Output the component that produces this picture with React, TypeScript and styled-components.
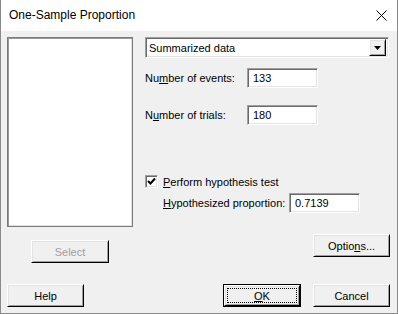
import React from "react"
import styled, { createGlobalStyle, css } from "styled-components"

const GlobalStyle = createGlobalStyle`
	html, body {
		margin: 0;
		padding: 0;
		background: #ffffff;
	}
	* {
		box-sizing: border-box;
	}
`

const sunken = css`
	border: 1px solid;
	border-color: #a0a0a0 #ffffff #ffffff #a0a0a0;
	box-shadow: inset 1px 1px #696969, inset -1px -1px #e3e3e3;
	background: #ffffff;
`

const raised = css`
	border: 1px solid;
	border-color: #ffffff #000000 #000000 #ffffff;
	box-shadow: inset 1px 1px #e3e3e3, inset -1px -1px #a0a0a0;
	background: #f0f0f0;
`

const Window = styled.div`
	width: 398px;
	height: 314px;
	display: flex;
	flex-direction: column;
	border: 1px solid #8a8a8a;
	border-top: none;
	font-family: "Liberation Sans", Arial, sans-serif;
	font-size: 11px;
	color: #000000;
`

const TitleBar = styled.div`
	height: 31px;
	flex: none;
	display: flex;
	align-items: center;
	justify-content: space-between;
	padding: 0 10px 0 8px;
	background: #ffffff;
`

const Title = styled.span`
	font-size: 12px;
	padding-bottom: 1px;
`

const Body = styled.div`
	flex: 1;
	display: flex;
	flex-direction: column;
	justify-content: space-between;
	padding: 6px 6px 6px 6px;
	background: #f0f0f0;
`

const MainRow = styled.div`
	display: flex;
	gap: 12px;
`

const LeftColumn = styled.div`
	width: 126px;
	display: flex;
	flex-direction: column;
	align-items: center;
	gap: 13px;
`

const ListBox = styled.div`
	width: 126px;
	height: 190px;
	border: 1px solid #7a7a7a;
	box-shadow: inset 1px 1px #9a9a9a, inset -1px -1px #e3e3e3;
	background: #ffffff;
`

const RightColumn = styled.div`
	flex: 1;
	display: flex;
	flex-direction: column;
`

const Combo = styled.div`
	${sunken};
	width: 244px;
	height: 21px;
	display: flex;
	align-items: center;
	justify-content: space-between;
	padding: 0 2px 0 3px;
`

const ComboArrow = styled.div`
	${raised};
	width: 17px;
	height: 17px;
	display: flex;
	align-items: center;
	justify-content: center;
`

const FieldRow = styled.div<{ $top: number; $indent?: number; $labelWidth: number }>`
	display: flex;
	align-items: center;
	margin-top: ${(p) => p.$top}px;
	padding-left: ${(p) => p.$indent ?? 0}px;

	& > label {
		width: ${(p) => p.$labelWidth}px;
		flex: none;
	}
`

const TextBox = styled.div`
	${sunken};
	width: 71px;
	height: 20px;
	display: flex;
	align-items: center;
	padding-left: 5px;
`

const CheckRow = styled.div`
	display: flex;
	align-items: center;
	gap: 5px;
	margin-top: 50px;
`

const CheckBox = styled.div`
	${sunken};
	width: 13px;
	height: 13px;
	display: flex;
	align-items: center;
	justify-content: center;
`

const Button = styled.div<{ $disabled?: boolean; $width?: number }>`
	${raised};
	width: ${(p) => p.$width ?? 77}px;
	height: 23px;
	display: flex;
	align-items: center;
	justify-content: center;
	color: ${(p) => (p.$disabled ? "#a0a0a0" : "#000000")};
	flex: none;
`

const DefaultButton = styled.div`
	width: 78px;
	height: 23px;
	border: 1px solid #000000;
	display: flex;
	flex: none;

	& > div {
		${raised};
		flex: 1;
		display: flex;
		padding: 2px;
	}

	& > div > span {
		flex: 1;
		display: flex;
		align-items: center;
		justify-content: center;
		outline: 1px dotted #000000;
		outline-offset: -1px;
	}
`

const OptionsRow = styled.div`
	display: flex;
	justify-content: flex-end;
	margin-top: 21px;
	padding-right: 1px;
`

const Footer = styled.div`
	display: flex;
	align-items: center;
	gap: 12px;
	padding-right: 1px;

	& > :first-child {
		margin-right: auto;
	}
`

const CloseIcon = () => (
	<svg width="11" height="11" viewBox="0 0 11 11">
		<path d="M0.5 0.5 L10.5 10.5 M10.5 0.5 L0.5 10.5" stroke="#000" strokeWidth="1" />
	</svg>
)

export default function App() {
	return (
		<>
			<GlobalStyle />
			<Window>
				<TitleBar>
					<Title>One-Sample Proportion</Title>
					<CloseIcon />
				</TitleBar>
				<Body>
					<MainRow>
						<LeftColumn>
							<ListBox />
							<Button $disabled $width={78}>Select</Button>
						</LeftColumn>
						<RightColumn>
							<Combo>
								<span>Summarized data</span>
								<ComboArrow>
									<svg width="7" height="4" viewBox="0 0 7 4">
										<path d="M0 0 H7 L3.5 4 Z" fill="#000" />
									</svg>
								</ComboArrow>
							</Combo>
							<FieldRow $top={10} $labelWidth={102}>
								<label>
									Nu<u>m</u>ber of events:
								</label>
								<TextBox>133</TextBox>
							</FieldRow>
							<FieldRow $top={17} $labelWidth={102}>
								<label>
									N<u>u</u>mber of trials:
								</label>
								<TextBox>180</TextBox>
							</FieldRow>
							<CheckRow>
								<CheckBox>
									<svg width="9" height="9" viewBox="0 0 9 9">
										<path d="M1 4 L3.5 6.5 L8 1.5" stroke="#000" strokeWidth="2" fill="none" />
									</svg>
								</CheckBox>
								<label>
									<u>P</u>erform hypothesis test
								</label>
							</CheckRow>
							<FieldRow $top={5} $indent={18} $labelWidth={126}>
								<label>
									<u>H</u>ypothesized proportion:
								</label>
								<TextBox>0.7139</TextBox>
							</FieldRow>
							<OptionsRow>
								<Button>
									<span>
										Optio<u>n</u>s...
									</span>
								</Button>
							</OptionsRow>
						</RightColumn>
					</MainRow>
					<Footer>
						<Button>Help</Button>
						<DefaultButton>
							<div>
								<span>
									<u>O</u>K
								</span>
							</div>
						</DefaultButton>
						<Button>Cancel</Button>
					</Footer>
				</Body>
			</Window>
		</>
	)
}
